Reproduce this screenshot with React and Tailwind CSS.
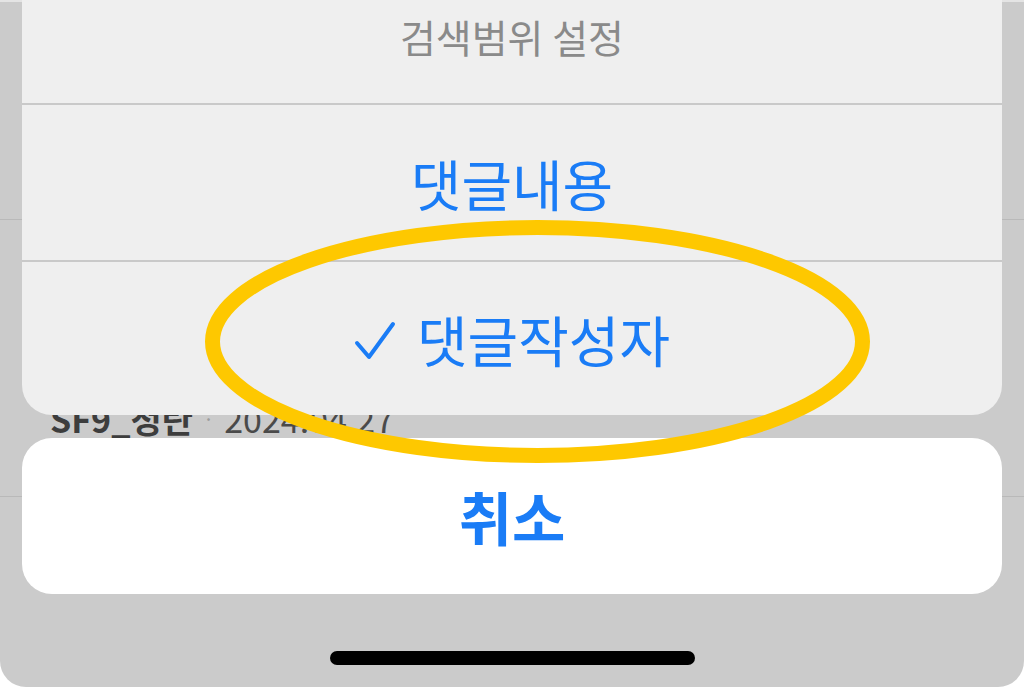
export default function App() {
  const font = { fontFamily: '"Noto Sans CJK KR", "Noto Sans", sans-serif' };

  return (
    <div className="h-[687px] w-[1024px] overflow-hidden bg-white" style={font}>
      <div className="relative h-full w-full overflow-hidden rounded-b-[26px] bg-[#cbcbcb]">
        {/* dimmed page underneath */}
        <div className="h-[2px] bg-[#e4e4e4]" />
        <div className="h-[218px] border-b border-[#b9b9b9]" />
        <div className="flex h-[277px] items-start border-b border-[#b9b9b9] pl-[50px] pt-[179px]">
          <span className="text-[34px] font-bold leading-[40px] text-[#3d3d3d]">SF9_청란</span>
          <span className="mx-[10px] text-[20px] leading-[40px] text-[#9d9d9d]">·</span>
          <span className="text-[34px] leading-[40px] text-[#4a4a4a]">2024.04.27</span>
        </div>

        {/* action sheet */}
        <div className="absolute inset-0 flex flex-col items-center px-[22px]">
          <div className="flex w-full flex-col overflow-hidden rounded-b-[30px] bg-[#efefef]">
            <div className="flex h-[103px] items-center justify-center pb-[30px] text-[39px] leading-none text-[#8a8a8a]">
              검색범위 설정
            </div>
            <div className="h-[2px] bg-[#c9c9c9]" />
            <div className="flex h-[155px] items-center justify-center text-[55px] leading-none text-[#1a7cf6]">
              댓글내용
            </div>
            <div className="h-[2px] bg-[#c9c9c9]" />
            <div className="flex h-[153px] items-center justify-center gap-[21px] text-[55px] leading-none text-[#1a7cf6]">
              <svg width="42" height="40" viewBox="0 0 42 40" fill="none" className="mt-[4px]">
                <path d="M3 22 L15 36 L39 3" stroke="#1a7cf6" strokeWidth="4" strokeLinecap="round" strokeLinejoin="round" />
              </svg>
              <span>댓글작성자</span>
            </div>
          </div>

          <div className="mt-[23px] flex h-[156px] w-full items-center justify-center rounded-[30px] bg-white text-[58px] font-bold leading-none text-[#1a7cf6]">
            취소
          </div>

          <div className="mt-[57px] h-[14px] w-[365px] rounded-full bg-black" />
        </div>

        {/* highlight annotation */}
        <svg className="pointer-events-none absolute left-0 top-0" width="1024" height="687">
          <ellipse cx="537.5" cy="341.5" rx="325" ry="114" fill="none" stroke="#fec800" strokeWidth="15" />
        </svg>
      </div>
    </div>
  );
}
